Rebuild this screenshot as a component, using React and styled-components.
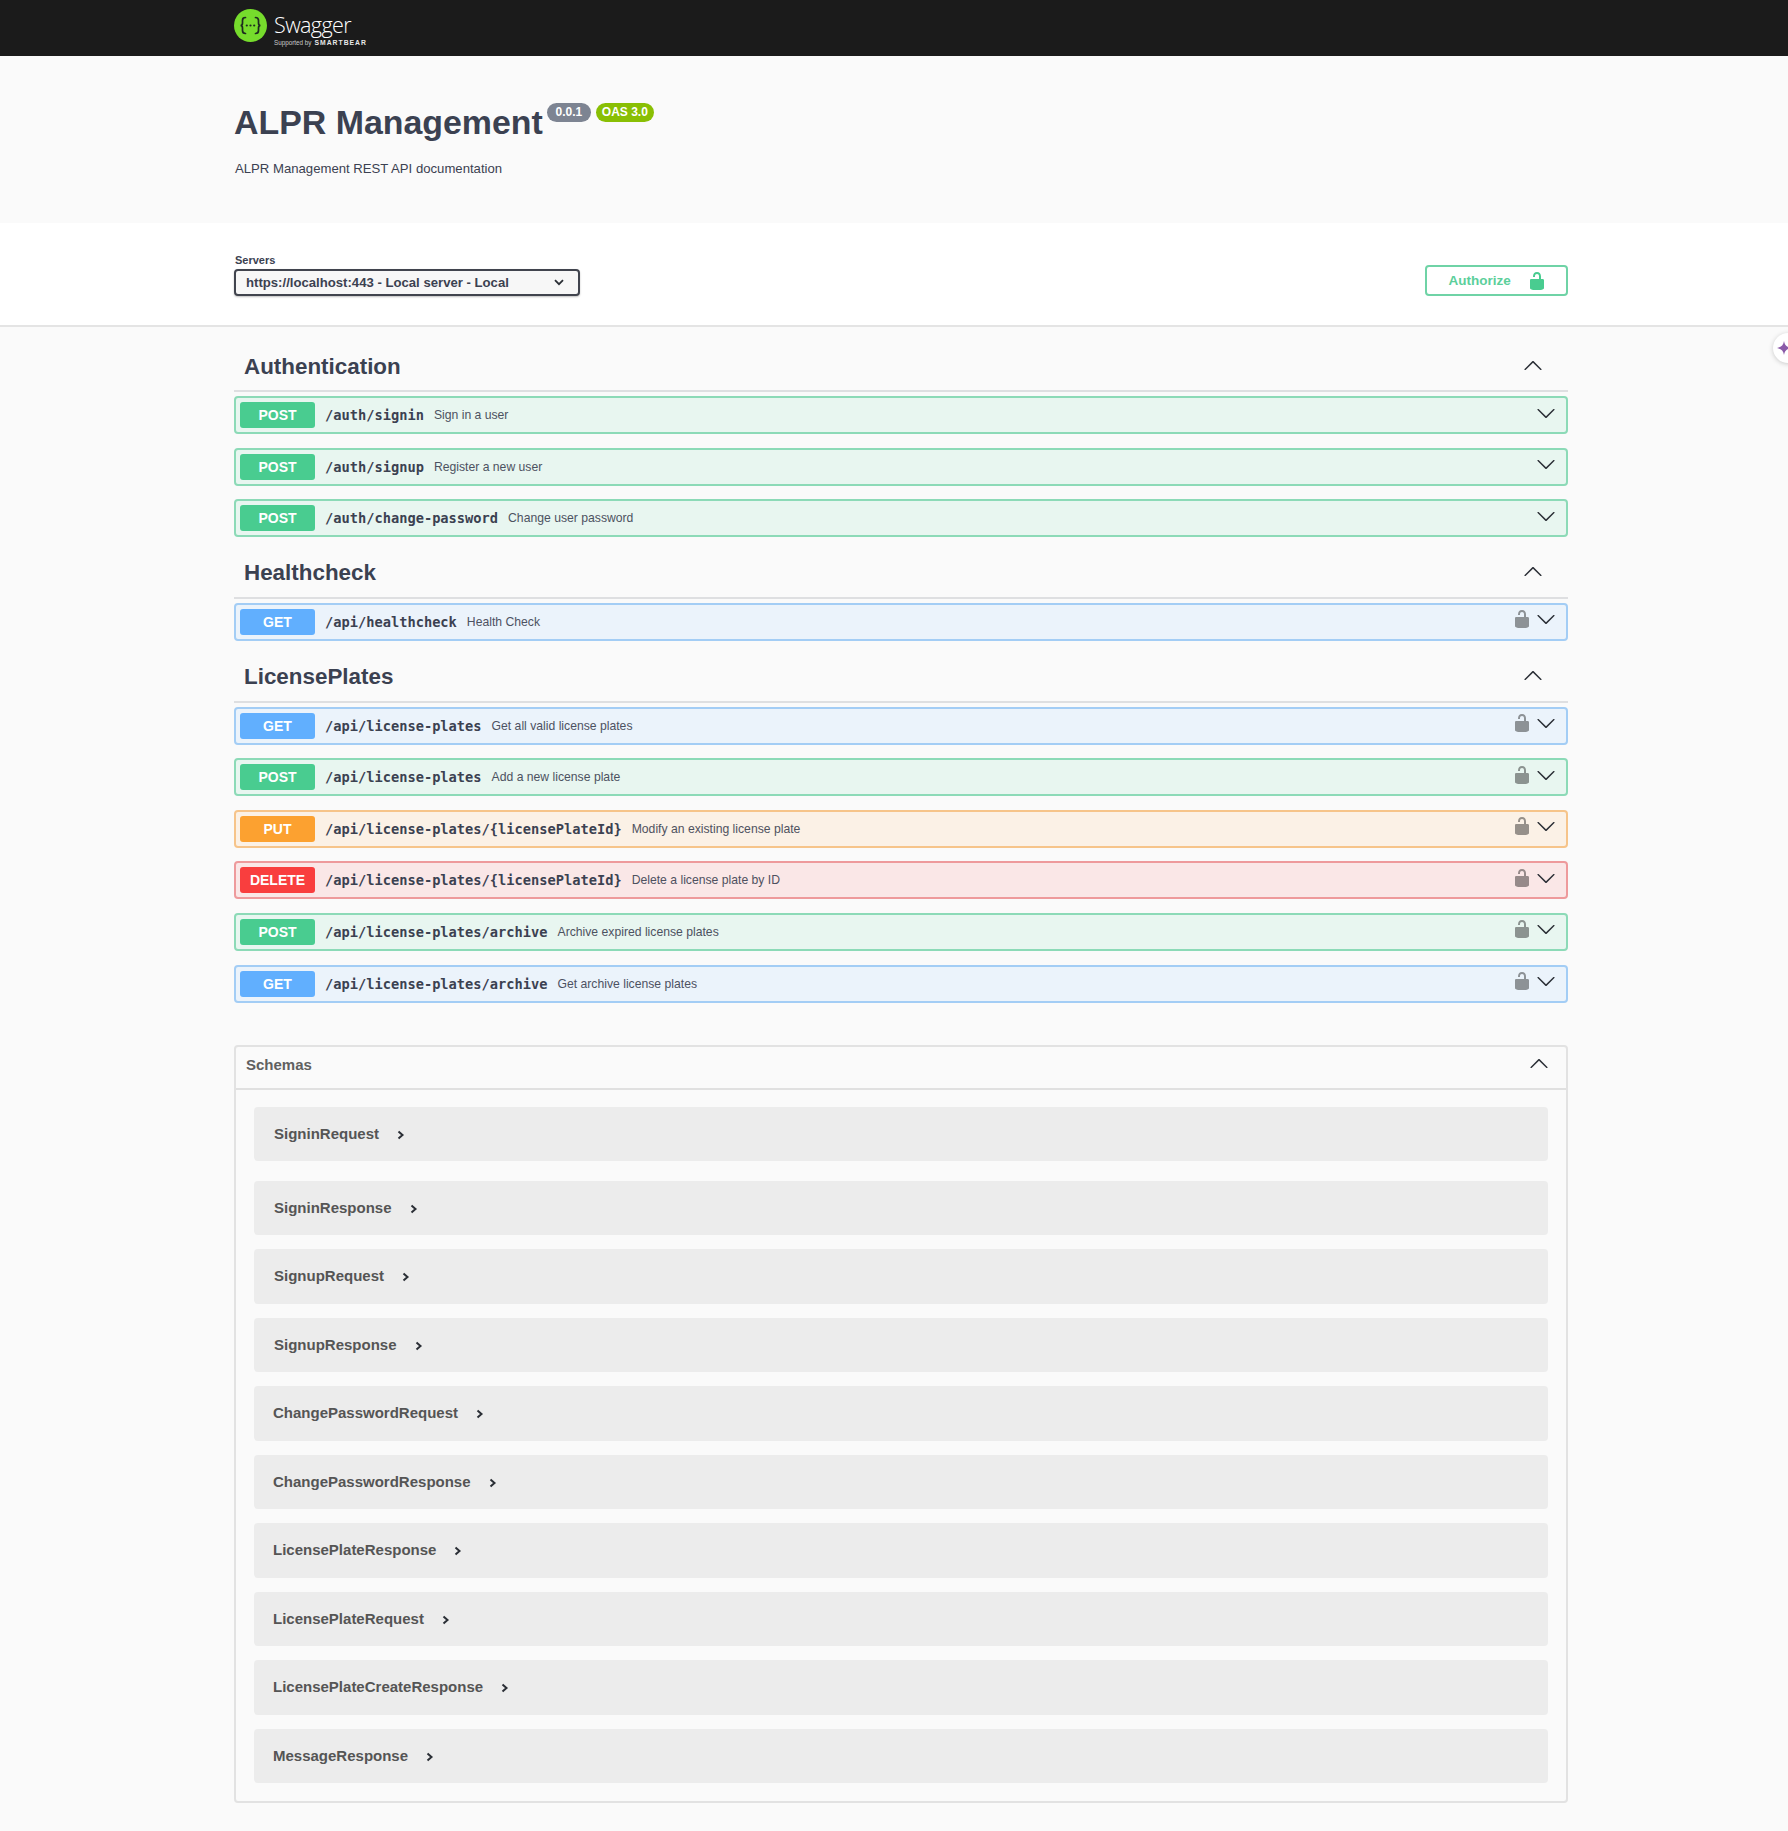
import React from 'react';
import styled, { createGlobalStyle } from 'styled-components';

const GlobalStyle = createGlobalStyle`
  html, body {
    margin: 0;
    padding: 0;
    background: #fafafa;
    overflow-x: hidden;
  }
  body {
    font-family: "Liberation Sans", Arial, sans-serif;
    color: #3b4151;
  }
`;

const methodColors = {
  POST: { solid: '#49cc90', soft: '#e8f6f0', line: '#8cdab7' },
  GET: { solid: '#61affe', soft: '#ebf3fb', line: '#a3cdf5' },
  PUT: { solid: '#fca130', soft: '#fbf1e6', line: '#f6c48a' },
  DELETE: { solid: '#f93e3e', soft: '#fae7e7', line: '#ee9a9c' },
};

const Page = styled.div`
  position: relative;
  min-height: 1831px;
  background: #fafafa;
`;
const TopBar = styled.header`
  display: flex;
  align-items: flex-start;
  gap: 7px;
  height: 56px;
  box-sizing: border-box;
  padding: 9px 0 0 234px;
  background: #1b1b1b;
`;
const Brand = styled.div`
  display: flex;
  flex-direction: column;
  color: #fff;
`;
const BrandName = styled.span`
  font-family: "Open Sans", sans-serif;
  font-weight: 300;
  font-size: 21.5px;
  line-height: 26px;
  letter-spacing: -0.6px;
  margin-top: 3px;
`;
const BrandSub = styled.span`
  display: flex;
  align-items: baseline;
  gap: 3px;
  margin-top: 1px;
  font-size: 6.3px;
  line-height: 8px;
  white-space: nowrap;
  color: #c8c8c8;
`;
const BrandBear = styled.b`
  font-size: 6.8px;
  letter-spacing: 1px;
  color: #e8e8e8;
`;

const Info = styled.section`
  height: 167px;
  padding: 43px 0 0 234px;
  box-sizing: border-box;
  background: #fafafa;
`;
const TitleRow = styled.div`
  display: flex;
  align-items: flex-start;
`;
const Title = styled.h1`
  margin: 0;
  font-size: 33.9px;
  line-height: 46px;
  font-weight: 700;
  color: #3b4151;
`;
const Badge = styled.span`
  margin: 4px 0 0 ${(p) => p.$gap}px;
  width: ${(p) => p.$width}px;
  height: 19px;
  border-radius: 10px;
  background: ${(p) => p.$color};
  color: #fff;
  font-size: 12px;
  font-weight: 700;
  line-height: 19px;
  text-align: center;
`;
const InfoText = styled.p`
  margin: 15px 0 0 1px;
  font-size: 13.15px;
  line-height: 18px;
  color: #3b4151;
`;

const SchemeBar = styled.section`
  display: flex;
  align-items: flex-start;
  justify-content: space-between;
  height: 104px;
  box-sizing: border-box;
  padding: 30px 220.5px 0 234px;
  border-bottom: 2px solid #e4e4e4;
  background: #fff;
`;
const ServerGroup = styled.div`
  display: flex;
  flex-direction: column;
`;
const ServerLabel = styled.label`
  margin-left: 1px;
  font-size: 11px;
  line-height: 15px;
  font-weight: 700;
  color: #3b4151;
`;
const ServerSelect = styled.div`
  display: flex;
  align-items: center;
  justify-content: space-between;
  width: 346px;
  height: 27px;
  margin-top: 1px;
  box-sizing: border-box;
  padding: 0 14px 0 10px;
  border: 2px solid #41444e;
  border-radius: 4px;
  background: #f7f7f7;
  box-shadow: 0 1px 2px rgba(0, 0, 0, 0.25);
  font-size: 13.15px;
  font-weight: 700;
  color: #3b4151;
`;
const AuthorizeButton = styled.button`
  display: flex;
  align-items: center;
  justify-content: space-between;
  width: 143px;
  height: 31px;
  margin-top: 12px;
  box-sizing: border-box;
  padding: 0 19px 0 22px;
  border: 2px solid #6fd3a6;
  border-radius: 4px;
  background: #fff;
  font-family: "Liberation Sans", Arial, sans-serif;
  font-size: 13.5px;
  font-weight: 700;
  color: #5ccf9b;
`;

const Main = styled.main`
  width: 1333.5px;
  margin-left: 234px;
  padding-top: 14px;
`;
const Section = styled.section`
  margin-bottom: 10.7px;
`;
const SectionHeader = styled.div`
  display: flex;
  align-items: center;
  justify-content: space-between;
  height: 49px;
  padding: 0 25px 0 10px;
  border-bottom: 2px solid #dedfe1;
`;
const SectionTitle = styled.h3`
  margin: 2px 0 0;
  font-size: 22.4px;
  font-weight: 700;
  color: #3b4151;
`;
const OpList = styled.div`
  display: flex;
  flex-direction: column;
  gap: 13.6px;
  margin-top: 4px;
`;
const OpRow = styled.div`
  display: flex;
  align-items: center;
  height: 38px;
  box-sizing: border-box;
  padding: 0 9.5px 0 4px;
  border: 2px solid ${(p) => methodColors[p.$method].line};
  border-radius: 4px;
  background: ${(p) => methodColors[p.$method].soft};
`;
const MethodTag = styled.span`
  width: 75px;
  height: 26px;
  flex: none;
  border-radius: 3px;
  background: ${(p) => methodColors[p.$method].solid};
  color: #fff;
  font-size: 14px;
  font-weight: 700;
  line-height: 26px;
  text-align: center;
`;
const OpPath = styled.span`
  margin-left: 10px;
  font-family: "DejaVu Sans Mono", monospace;
  font-size: 13.7px;
  font-weight: 700;
  color: #3b4151;
`;
const OpSummary = styled.span`
  margin-left: 10px;
  font-size: 12.2px;
  color: #3b4151;
  opacity: 0.9;
`;
const OpActions = styled.div`
  display: flex;
  align-items: center;
  gap: 4px;
  margin: 0 0 5px auto;
`;

const SchemaBox = styled.section`
  margin-top: 42px;
  margin-bottom: 29px;
  border: 2px solid #e2e2e2;
  border-radius: 4px;
`;
const SchemaHeader = styled.div`
  display: flex;
  align-items: center;
  justify-content: space-between;
  height: 43px;
  box-sizing: border-box;
  padding: 0 17px 6px 10px;
  border-bottom: 2px solid #e0e0e0;
`;
const SchemaTitle = styled.h4`
  margin: 0;
  font-size: 15px;
  font-weight: 700;
  color: #606060;
`;
const SchemaList = styled.div`
  display: flex;
  flex-direction: column;
  gap: 14px;
  padding: 17px 18px 18px;
`;
const SchemaRow = styled.div`
  display: flex;
  align-items: center;
  gap: 18px;
  height: 54.5px;
  box-sizing: border-box;
  margin-bottom: ${(p) => (p.$extra ? '5.5px' : '0')};
  padding: 0 0 1px ${(p) => (p.$tight ? '19px' : '20px')};
  border-radius: 4px;
  background: #ececec;
  font-size: 15px;
  font-weight: 700;
  color: #555;
`;
const SchemaChevron = styled.svg`
  margin-top: 3px;
`;

const AssistTab = styled.div`
  position: absolute;
  top: 333px;
  left: 1773px;
  display: flex;
  align-items: center;
  width: 30px;
  height: 30px;
  padding-left: 4px;
  box-sizing: border-box;
  border-radius: 50%;
  background: #fff;
  box-shadow: 0 1px 5px rgba(0, 0, 0, 0.2);
`;

const arrowPath =
  'M17.418 6.109c.272-.268.709-.268.979 0s.271.701 0 .969l-7.908 7.83c-.27.268-.707.268-.979 0l-7.908-7.83c-.27-.268-.27-.701 0-.969.271-.268.709-.268.979 0L10 13.25l7.418-7.141z';
const lockPath =
  'M15.8 8H14V5.6C14 2.703 12.665 1 10 1 7.334 1 6 2.703 6 5.6V6h2v-.801C8 3.754 8.797 3 10 3c1.203 0 2 .754 2 2.199V8H4c-.553 0-1 .646-1 1.199V17c0 .549.428 1.139.951 1.307l1.197.387C5.672 18.861 6.55 19 7.1 19h5.8c.549 0 1.428-.139 1.951-.307l1.196-.387c.524-.167.953-.757.953-1.306V9.199C17 8.646 16.352 8 15.8 8z';

const Arrow = ({ up }) => (
  <svg width="20" height="20" viewBox="0 0 20 20" fill="#2b2f36" style={up ? { transform: 'rotate(180deg)' } : undefined}>
    <path d={arrowPath} />
  </svg>
);

const Lock = ({ color }) => (
  <svg width="20" height="20" viewBox="0 0 20 20" fill={color}>
    <path d={lockPath} />
  </svg>
);

const SmallChevron = () => (
  <SchemaChevron width="8" height="10" viewBox="0 0 8 10" fill="none" stroke="#2b2f36" strokeWidth="2">
    <path d="M1.500 1.500 5.500 5 1.500 8.500" />
  </SchemaChevron>
);

const Logo = () => (
  <svg width="33" height="33" viewBox="0 0 33 33">
    <circle cx="16.5" cy="16.5" r="16.5" fill="#76dc2c" />
    <g fill="none" stroke="#1d2b20" strokeWidth="1.7" strokeLinecap="round">
      <path d="M11.5 8.5c-2.600 0-3 1.200-3 3v2.600c0 1.500-.7 2.400-2 2.400 1.300 0 2 .9 2 2.400v2.600c0 1.800.4 3 3 3" />
      <path d="M21.5 8.500c2.600 0 3 1.200 3 3v2.600c0 1.500.7 2.400 2 2.400-1.300 0-2 .9-2 2.400v2.600c0 1.800-.4 3-3 3" />
    </g>
    <g fill="#1d2b20">
      <circle cx="12.8" cy="16.5" r="1.1" />
      <circle cx="16.5" cy="16.5" r="1.1" />
      <circle cx="20.2" cy="16.5" r="1.1" />
    </g>
  </svg>
);

const sections = [
  {
    name: 'Authentication',
    ops: [
      { method: 'POST', path: '/auth/signin', summary: 'Sign in a user' },
      { method: 'POST', path: '/auth/signup', summary: 'Register a new user' },
      { method: 'POST', path: '/auth/change-password', summary: 'Change user password' },
    ],
  },
  {
    name: 'Healthcheck',
    ops: [{ method: 'GET', path: '/api/healthcheck', summary: 'Health Check', locked: true }],
  },
  {
    name: 'LicensePlates',
    ops: [
      { method: 'GET', path: '/api/license-plates', summary: 'Get all valid license plates', locked: true },
      { method: 'POST', path: '/api/license-plates', summary: 'Add a new license plate', locked: true },
      { method: 'PUT', path: '/api/license-plates/{licensePlateId}', summary: 'Modify an existing license plate', locked: true },
      { method: 'DELETE', path: '/api/license-plates/{licensePlateId}', summary: 'Delete a license plate by ID', locked: true },
      { method: 'POST', path: '/api/license-plates/archive', summary: 'Archive expired license plates', locked: true },
      { method: 'GET', path: '/api/license-plates/archive', summary: 'Get archive license plates', locked: true },
    ],
  },
];

const schemas = [
  'SigninRequest',
  'SigninResponse',
  'SignupRequest',
  'SignupResponse',
  'ChangePasswordRequest',
  'ChangePasswordResponse',
  'LicensePlateResponse',
  'LicensePlateRequest',
  'LicensePlateCreateResponse',
  'MessageResponse',
];

const App = () => {
  return (
    <Page>
      <GlobalStyle />
      <TopBar>
        <Logo />
        <Brand>
          <BrandName>Swagger</BrandName>
          <BrandSub>
            Supported by <BrandBear>SMARTBEAR</BrandBear>
          </BrandSub>
        </Brand>
      </TopBar>
      <Info>
        <TitleRow>
          <Title>ALPR Management</Title>
          <Badge $gap={4} $width={44} $color="#7d8492">0.0.1</Badge>
          <Badge $gap={5} $width={58} $color="#89bf04">OAS 3.0</Badge>
        </TitleRow>
        <InfoText>ALPR Management REST API documentation</InfoText>
      </Info>
      <SchemeBar>
        <ServerGroup>
          <ServerLabel>Servers</ServerLabel>
          <ServerSelect>
            https://localhost:443 - Local server - Local
            <svg width="10" height="7" viewBox="0 0 10 7" fill="none" stroke="#2b2f36" strokeWidth="1.8">
              <path d="M1 1.200 5 5.200 9 1.200" />
            </svg>
          </ServerSelect>
        </ServerGroup>
        <AuthorizeButton>
          Authorize
          <Lock color="#49cc90" />
        </AuthorizeButton>
      </SchemeBar>
      <Main>
        {sections.map((section) => (
          <Section key={section.name}>
            <SectionHeader>
              <SectionTitle>{section.name}</SectionTitle>
              <Arrow up />
            </SectionHeader>
            <OpList>
              {section.ops.map((op) => (
                <OpRow key={op.method + op.path} $method={op.method}>
                  <MethodTag $method={op.method}>{op.method}</MethodTag>
                  <OpPath>{op.path}</OpPath>
                  <OpSummary>{op.summary}</OpSummary>
                  <OpActions>
                    {op.locked && <Lock color="rgba(0, 0, 0, 0.4)" />}
                    <Arrow />
                  </OpActions>
                </OpRow>
              ))}
            </OpList>
          </Section>
        ))}
        <SchemaBox>
          <SchemaHeader>
            <SchemaTitle>Schemas</SchemaTitle>
            <Arrow up />
          </SchemaHeader>
          <SchemaList>
            {schemas.map((name, i) => (
              <SchemaRow key={name} $extra={i === 0} $tight={i > 3}>
                {name}
                <SmallChevron />
              </SchemaRow>
            ))}
          </SchemaList>
        </SchemaBox>
      </Main>
      <AssistTab>
        <svg width="14" height="14" viewBox="0 0 14 14" fill="#8a5aa8">
          <path d="M7 0c.6 4 2.600 6.200 7 7-4.400.8-6.400 3-7 7-.6-4-2.600-6.200-7-7 4.400-.8 6.400-3 7-7z" />
        </svg>
      </AssistTab>
    </Page>
  );
};

export default App;
